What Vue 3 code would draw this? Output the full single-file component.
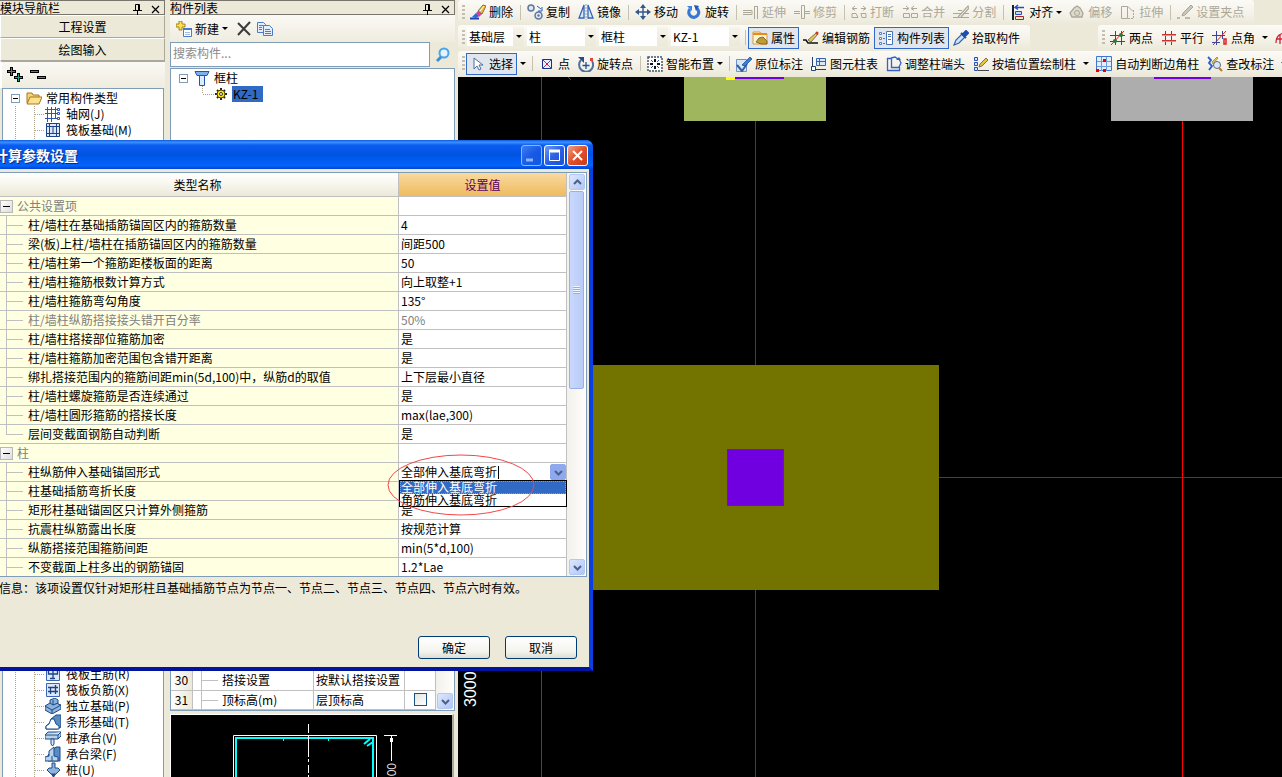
<script setup>
import { ref } from 'vue'

const icons = {
  brush: '<path d="M0 14.500h9" stroke="#1d3fae" stroke-width="2"/><path d="M2 13l4-4 3 3-3 2z" fill="#2b66d8"/><path d="M6 9l2-2 4 3-3 3z" fill="#d8409a"/><path d="M8 7l5-6 3 1-4 8z" fill="#f3c22b" stroke="#554" stroke-width=".8"/><path d="M10 7l4-5" stroke="#fff"/>',
  copy: '<circle cx="4" cy="4" r="3" fill="#dfe8f6" stroke="#5f779d" stroke-width="1.500"/><circle cx="11.500" cy="11.500" r="3.500" fill="#dfe8f6" stroke="#5f779d" stroke-width="1.500"/><circle cx="11.500" cy="11.500" r="1.200" fill="#5f779d"/><path d="M10 2l4 3M15 3v4h-4" stroke="#2d5cc0" fill="none"/>',
  mirror: '<path d="M6 1v13H1zM10 1v13h5z" fill="#dbe9fb" stroke="#3465b4" stroke-width="1.300"/><path d="M8 0v16" stroke="#88a4d0" stroke-dasharray="2 1"/>',
  move: '<path d="M8 2v12M2 8h12" stroke="#34568e" stroke-width="1.400"/><path d="M8 0l3 4H5zM8 16l3-4H5zM0 8l4-3v6zM16 8l-4-3v6z" fill="#34568e"/>',
  rotate: '<path d="M4 5a5 5 0 1 0 7-.500" fill="none" stroke="#3577d4" stroke-width="3.200"/><path d="M8 1l5 1-3 5z" fill="#2455b8"/><path d="M1 2h5v5z" fill="#3d82dd"/>',
  extend: '<path d="M0 8.500h8M0 6.500h9v4H0M11.500 2v13M14.500 2v13M11 2.500h4" stroke="#aca899"/>',
  trim: '<path d="M0 7.500h6M0 9.500h6M11 7.500h5M11 9.500h5" stroke="#aca899"/><path d="M7.500 1.500h3v13h-3z" fill="none" stroke="#aca899"/>',
  breaks: '<path d="M1 4.500h5M10 4.500h5M4 2L1 4.500l3 2M12 2l3 2.500-3 2M1 9.500h4l2 4H1zM10 9.500h5v4h-4z" fill="none" stroke="#aca899"/>',
  merge: '<path d="M1 4.500h5M10 4.500h5M4 2l3 2.500-3 2M12 2L9 4.500l3 2M1.500 9.500h6v4h-6zM9.500 9.500h6v4h-6z" fill="none" stroke="#aca899"/>',
  split: '<path d="M0 9.500h8M0 13.500h16M5 6.500h4M10 9.500h6M5 13L15 2l1 2-8 9" fill="none" stroke="#aca899" stroke-width="1.200"/>',
  align: '<path d="M3 1v15" stroke="#123" stroke-width="2"/><path d="M6 3.500h8M8 1L5 3.500l3 2" stroke="#2350c4" fill="none" stroke-width="1.400"/><path d="M5.500 7.500h6v3h-6z" fill="#c7d8f5" stroke="#2350c4"/><path d="M5.500 12.500h8v3h-8z" fill="#eec" stroke="#a22"/>',
  offset: '<path d="M8 2l3 2 3 5-1 4H3l-2-4 4-5z" fill="#ddd9cc" stroke="#aca899" stroke-width="1.300"/><circle cx="8" cy="9" r="2.500" fill="none" stroke="#aca899"/>',
  stretch: '<path d="M1.500 2.500h6v12h-6zM8 2.500l5 5" fill="none" stroke="#aca899"/><path d="M8 14.500h6M13.500 6v9" stroke="#aca899" stroke-dasharray="2 1"/>',
  pen: '<path d="M0 14h3M8 14h5" stroke="#aca899" stroke-width="1.500"/><path d="M5 12l1-3 8-8 2 2-8 8z" fill="#c9c6ba" stroke="#aca899"/>',
  prop: '<path d="M1 2h7l1 2h6v10H1z" fill="#fdf3d5" stroke="#d99a2d"/><path d="M1 4h14" stroke="#e88b1c" stroke-width="2"/><path d="M4 12l3-4 4-1 4 4v3H9z" fill="#c29b30" stroke="#6b5a20" stroke-width=".8"/>',
  rebar: '<path d="M0 10h3l2 3h10" fill="none" stroke="#111" stroke-width="1.500"/><path d="M5 10l8-7 2 1-7 8z" fill="#e8c84b" stroke="#555" stroke-width=".8"/><circle cx="14" cy="3" r="1.500" fill="#c33"/>',
  list: '<path d="M1.500 2.500h2v2h-2zM1.500 7.500h2v2h-2zM1.500 12.500h2v2h-2z" fill="#fff" stroke="#5a7fb8"/><path d="M8.500 1.500h6v13h-6z" fill="#fff" stroke="#4a74b8"/><path d="M10 4.500h3M10 6.500h3M10 9.500h3M5 3.500h2M5 8.500h2M5 13.500h2" stroke="#4a74b8"/>',
  picker: '<path d="M1 15l2-5 6-6 3 3-6 6z" fill="#cfe4fb" stroke="#2c62bd" stroke-width="1.200"/><path d="M8 3l5 5M10 4l3-3 2 2-3 3z" fill="#1e4fae" stroke="#1e4fae" stroke-width="2"/>',
  cursor: '<path d="M4 2v11l3-3 2 4 2-1-2-4h4z" fill="#fff" stroke="#4d6c9e"/>',
  point: '<path d="M3.500 3.500h9v9h-9z" fill="#eef" stroke="#1c2f8a"/><path d="M4 4l8 8M12 4l-8 8" stroke="#4457a8"/><path d="M7 7h2v2H7z" fill="#e11"/>',
  rotpoint: '<path d="M3 4a7 7 0 1 0 11 1" fill="none" stroke="#4f6f9f" stroke-width="2"/><path d="M8 6v7M4.500 9.500h7" stroke="#234f9c" stroke-width="1.300"/><path d="M0 1h6v6z" fill="#2f4d7c"/><path d="M12 2h3v3h-3z" fill="#d44"/>',
  smart: '<path d="M1 1h14v14H1z" fill="#fff" stroke="#456" stroke-width="1.500" stroke-dasharray="2 1"/><path d="M8 3v3M8 10v3M3 8h3M10 8h3" stroke="#111" stroke-width="2"/><path d="M4 4l2 2M12 4l-2 2M4 12l2-2M12 12l-2-2" stroke="#234fa0"/>',
  note: '<path d="M.500 3.500h10v12H.500z" fill="#d9e6f8" stroke="#6f93c6"/><path d="M1 9l5 6 5-7" fill="none" stroke="#31619c" stroke-width="2"/><path d="M6 9l8-8 2 2-7 7z" fill="#3d7fd8" stroke="#1d4fa0" stroke-width=".8"/>',
  coltable: '<path d="M1.500 1v14M1 13.500h14" stroke="#24406e"/><path d="M5.500 2.500h9v7h-9z" fill="#dce8fa" stroke="#3263b5"/><path d="M5 5.500h9M8.500 2v7" stroke="#3263b5"/><path d="M.500 10.500h4v4h-4z" fill="#fff" stroke="#24406e"/>',
  colend: '<path d="M1.500 2.500h4v9h8v3h-12zM5 2l4-1 3 2M13 11l2-4-2-4" fill="none" stroke="#3562c4" stroke-width="1.300"/><path d="M10 4h5l-2-3z" fill="#3562c4"/>',
  wallcol: '<path d="M1.500 1.500h3v3h-3zM1.500 6.500h3v3h-3zM1.500 11.500h3v3h-3z" fill="#dce8fa" stroke="#2451b5"/><path d="M5 14.500h11" stroke="#445"/><path d="M6 11l1-3 6-6 2 2-6 6z" fill="#e6c342" stroke="#654" stroke-width=".8"/>',
  autocol: '<path d="M.500.500h15v14H.500z" fill="#e2eefc" stroke="#3f76cc"/><path d="M5.500 1v14M10.500 1v14M1 5.500h14M1 10.500h14" stroke="#6e9be0"/><path d="M7 3h3v3H7zM0 13h3v3H0zM7 13h3v3H7z" fill="#e00"/>',
  check: '<path d="M1 1l3 3-2 3 3 3-3 4" fill="none" stroke="#2a5ec4" stroke-width="1.800"/><circle cx="10" cy="9" r="3.500" fill="#d6eafc" stroke="#667"/><path d="M12 12l3 3" stroke="#b57a2a" stroke-width="2"/><path d="M5 6l5-5 1 1-5 6z" fill="#e6c342" stroke="#665" stroke-width=".6"/>',
  twopt: '<path d="M0 5.500h15M0 11.500h15M5.500 1v14M11.500 1v14" stroke="#34469a"/><path d="M1 15L14 1" stroke="#d22"/><circle cx="5" cy="11" r="2" fill="#2d7a2d"/><circle cx="11" cy="5" r="2" fill="#2d7a2d"/>',
  parallel: '<path d="M4.500 1v14M10.500 1v14" stroke="#34469a"/><path d="M1 4.500h14M1 10.500h14" stroke="#c33"/><path d="M1 5.500h14M1 11.500h14" stroke="#99a8cc"/>',
  ptangle: '<path d="M0 5.500h13M0 12.500h8M4.500 1v14M10.500 1v8" stroke="#34469a"/><path d="M1 15L14 1" stroke="#d22"/><path d="M12 9h2v5h-2z" fill="none" stroke="#d22" stroke-width="1.500"/>',
  arc: '<path d="M1 13C1 5 6 3 12 3M1 9h8M5 5v9" fill="none" stroke="#c23" stroke-width="1.300"/>',
  folder: '<path d="M1 13V3h5l1 2h6v3" fill="#f6d476" stroke="#a9771c"/><path d="M1 14l3-7h12l-3 7z" fill="#fbe08d" stroke="#a9771c"/>',
  grid: '<path d="M2.500 1v15M6.500 1v15M10.500 1v12M0 3.500h13M0 7.500h13M0 12.500h13" stroke="#2c55b4"/><path d="M12.500 2.500h2v2h-2zM12.500 6.500h2v2h-2zM12.500 11.500h2v2h-2z" fill="#fff" stroke="#2c55b4"/>',
  raft: '<path d="M1.500 1.500h13v13h-13z" fill="#dce8fa" stroke="#1b4284"/><path d="M4.500 4.500h7v7h-7zM4.500 1v13M11.500 1v13M1 4.500h13M1 11.500h13M8 4v8" fill="none" stroke="#1b4284"/>',
  mainbar: '<path d="M1.500 1.500h13v13h-13z" fill="#dbe8fc" stroke="#3a64b8"/><path d="M3.500 5v3h9V5M8 3v9M5 12.500h5" fill="none" stroke="#1b4284" stroke-width="1.300"/>',
  negbar: '<path d="M1.500 1.500h13v13h-13z" fill="#dbe8fc" stroke="#3a64b8"/><path d="M3 5.500h10M3 9.500h10M5.500 5v7M10.500 3v9" fill="none" stroke="#1b4284" stroke-width="1.300"/>',
  pad: '<path d="M0 8l5-3V2l5-2 3 2v4l3 1v4l-9 5-7-4z" fill="#8db2dc" stroke="#1b4a86"/><path d="M0 8l7 4 9-5M7 12v4M5 5l3 2 5-2M8 7V2" fill="none" stroke="#1b4a86"/>',
  strip: '<path d="M1 15v-3l4-3 1-4 5-4h5v12l-4 2z" fill="#5a8cc4" stroke="#1b4a86"/><path d="M1 15v-3l3-2 2-5h3l2 5 3 2v3z" fill="#fff" stroke="#1b4a86"/>',
  cap: '<path d="M0 5l3-3h13v4l-3 3H0z" fill="#b8d2ee" stroke="#1b4a86"/><path d="M0 5h13l3-3M13 5v4M6 9h3v5l-1.500 2L6 14z" fill="#dce8fa" stroke="#1b4a86"/>',
  capbeam: '<path d="M3 15V9l8-8h4v14z" fill="#5a8cc4" stroke="#1b4a86"/><path d="M0 15v-4l4-1V5l5-4v9l4 1v4z" fill="#b8d2ee" stroke="#1b4a86"/><path d="M7 10v5" stroke="#1b4a86"/>',
  pile: '<path d="M7 1h3v5h3l2 2-4 4H6L2 8l2-2h3z" fill="#8db2dc" stroke="#1b4a86"/><path d="M6 12h5l-2.500 4z" fill="#1b4a86"/>',
  column: '<path d="M1 1.500h14l-2 4H3z" fill="#7fb0ee" stroke="#2255a4"/><path d="M5.500 5.500h5v10h-5z" fill="#dcecff" stroke="#2255a4"/>',
  gear: '<path d="M8 2v12M2 8h12M4 4l8 8M12 4l-8 8" stroke="#222" stroke-width="2"/><circle cx="8" cy="8" r="4" fill="#ffe600" stroke="#554400"/><circle cx="8" cy="8" r="1.500" fill="#fff" stroke="#333"/>',
  create: '<path d="M3 0h3v3h3v3H6v3H3V6H0V3h3z" fill="#ffe04a" stroke="#8a6d14" stroke-width=".8"/><path d="M7.500 7.500h8v8h-8z" fill="#fff" stroke="#4a7ac8"/><path d="M7 8h9" stroke="#4a7ac8" stroke-width="2"/><path d="M9 11.500h5M9 13.500h5" stroke="#9bbae8"/>',
  erase: '<path d="M2 2l12 12M14 1L2 14" stroke="#3b3b3b" stroke-width="2"/>',
  duplicate: '<path d="M.500 1.500h6l2 2v8h-8z" fill="#e5effc" stroke="#4a7ac8"/><path d="M6.500 4.500h6l3 3v7h-9z" fill="#e5effc" stroke="#4a7ac8"/><path d="M2 4.500h4M2 6.500h3M2 8.500h3M8 8.500h5M8 10.500h6M8 12.500h6" stroke="#4a7ac8"/>',
  search: '<circle cx="9" cy="6" r="4.500" fill="#e3f4ff" stroke="#4ba3e8" stroke-width="2"/><path d="M6 10l-4 4" stroke="#3a8fd8" stroke-width="3"/>',
  addall: '<path d="M4.500 0v9M0 4.500h9M11.500 6v9M7 10.500h9" stroke="#000" stroke-width="3"/><path d="M4.500 1v7M1 4.500h7M11.500 7v7M8 10.500h7" stroke="#15a08a"/>',
  suball: '<path d="M0 4.500h9M7 10.500h9" stroke="#000" stroke-width="3"/><path d="M1 4.500h7M8 10.500h7" stroke="#15a08a"/>',
  pin: '<path d="M5.500 3.500h4v6h-4zM3 9.500h9M7.500 10v4M8.500 4v5" fill="none" stroke="#000"/>',
  close: '<path d="M4 5l7 7M11 5l-7 7" stroke="#000" stroke-width="1.200"/>',
}

const row1 = [
  { t: '删除', i: 'brush' }, 0, { t: '复制', i: 'copy' }, { t: '镜像', i: 'mirror' }, 0,
  { t: '移动', i: 'move' }, { t: '旋转', i: 'rotate' }, 0,
  { t: '延伸', i: 'extend', off: true }, { t: '修剪', i: 'trim', off: true }, 0,
  { t: '打断', i: 'breaks', off: true }, { t: '合并', i: 'merge', off: true }, { t: '分割', i: 'split', off: true }, 0,
  { t: '对齐', i: 'align', menu: true }, { t: '偏移', i: 'offset', off: true }, { t: '拉伸', i: 'stretch', off: true }, 0,
  { t: '设置夹点', i: 'pen', off: true },
]
const row2 = [
  0, { t: '属性', i: 'prop', on: true }, { t: '编辑钢筋', i: 'rebar' },
  { t: '构件列表', i: 'list', on: true }, { t: '拾取构件', i: 'picker' },
]
const row2b = [
  { t: '两点', i: 'twopt' }, { t: '平行', i: 'parallel' }, { t: '点角', i: 'ptangle', split: true }, { t: '', i: 'arc' },
]
const row3 = [
  { t: '选择', i: 'cursor', on: true, split: true }, 0, { t: '点', i: 'point' }, { t: '旋转点', i: 'rotpoint' }, 0,
  { t: '智能布置', i: 'smart', menu: true }, 0, { t: '原位标注', i: 'note' }, { t: '图元柱表', i: 'coltable' },
  { t: '调整柱端头', i: 'colend' }, { t: '按墙位置绘制柱', i: 'wallcol', split: true },
  { t: '自动判断边角柱', i: 'autocol' }, { t: '查改标注', i: 'check', split: true },
]
const bars = [
  [{ items: row1 }],
  [{ combos: [['基础层', 'narrow'], ['柱'], ['框柱'], ['KZ-1']], items: row2 }, { items: row2b, far: true }],
  [{ items: row3, wide: true }],
]

const navTop = [['轴网(J)', 'grid'], ['筏板基础(M)', 'raft']]
const navBottom = [
  ['筏板主筋(R)', 'mainbar'], ['筏板负筋(X)', 'negbar'], ['独立基础(P)', 'pad'], ['条形基础(T)', 'strip'],
  ['桩承台(V)', 'cap'], ['承台梁(F)', 'capbeam'], ['桩(U)', 'pile'],
]

const params = [
  { n: '公共设置项', group: true },
  { n: '柱/墙柱在基础插筋锚固区内的箍筋数量', v: '4' },
  { n: '梁(板)上柱/墙柱在插筋锚固区内的箍筋数量', v: '间距500' },
  { n: '柱/墙柱第一个箍筋距楼板面的距离', v: '50' },
  { n: '柱/墙柱箍筋根数计算方式', v: '向上取整+1' },
  { n: '柱/墙柱箍筋弯勾角度', v: '135°' },
  { n: '柱/墙柱纵筋搭接接头错开百分率', v: '50%', off: true },
  { n: '柱/墙柱搭接部位箍筋加密', v: '是' },
  { n: '柱/墙柱箍筋加密范围包含错开距离', v: '是' },
  { n: '绑扎搭接范围内的箍筋间距min(5d,100)中，纵筋d的取值', v: '上下层最小直径' },
  { n: '柱/墙柱螺旋箍筋是否连续通过', v: '是' },
  { n: '柱/墙柱圆形箍筋的搭接长度', v: 'max(lae,300)' },
  { n: '层间变截面钢筋自动判断', v: '是', last: true },
  { n: '柱', group: true },
  { n: '柱纵筋伸入基础锚固形式', edit: true },
  { n: '柱基础插筋弯折长度', v: '' },
  { n: '矩形柱基础锚固区只计算外侧箍筋', v: '是' },
  { n: '抗震柱纵筋露出长度', v: '按规范计算' },
  { n: '纵筋搭接范围箍筋间距', v: 'min(5*d,100)' },
  { n: '不变截面上柱多出的钢筋锚固', v: '1.2*Lae' },
]
const options = ['全部伸入基底弯折', '角筋伸入基底弯折']
const anchor = ref(options[0])
const keyword = ref('')
const props = [
  { id: 30, n: '搭接设置', v: '按默认搭接设置' },
  { id: 31, n: '顶标高(m)', v: '层顶标高', check: true },
]
</script>

<template>
  <div class="app">
    <aside class="panel nav">
      <header class="caption">
        <span class="cap-text">模块导航栏</span>
        <button class="mini" aria-label="固定"><svg class="ico" viewBox="0 0 16 16" v-html="icons.pin" /></button>
        <button class="mini" aria-label="关闭"><svg class="ico" viewBox="0 0 16 16" v-html="icons.close" /></button>
      </header>
      <button class="section">工程设置</button>
      <button class="section">绘图输入</button>
      <div class="tools">
        <button class="mini" aria-label="全部展开"><svg class="ico" viewBox="0 0 16 16" v-html="icons.addall" /></button>
        <button class="mini" aria-label="全部折叠"><svg class="ico" viewBox="0 0 16 16" v-html="icons.suball" /></button>
      </div>
      <ul class="tree">
        <li class="root"><span class="fold"></span><svg class="ico" viewBox="0 0 16 16" v-html="icons.folder" /><span>常用构件类型</span></li>
        <li v-for="n in navTop" :key="n[0]" class="leaf"><svg class="ico" viewBox="0 0 16 16" v-html="icons[n[1]]" /><span>{{ n[0] }}</span></li>
        <li class="leaf-gap"></li>
        <li v-for="n in navBottom" :key="n[0]" class="leaf"><svg class="ico" viewBox="0 0 16 16" v-html="icons[n[1]]" /><span>{{ n[0] }}</span></li>
      </ul>
    </aside>

    <aside class="panel list">
      <header class="caption">
        <span class="cap-text">构件列表</span>
        <button class="mini" aria-label="固定"><svg class="ico" viewBox="0 0 16 16" v-html="icons.pin" /></button>
        <button class="mini" aria-label="关闭"><svg class="ico" viewBox="0 0 16 16" v-html="icons.close" /></button>
      </header>
      <div class="tools list-tools">
        <button class="tool"><svg class="ico" viewBox="0 0 16 16" v-html="icons.create" /><span>新建</span><i class="tri"></i></button>
        <button class="mini" aria-label="删除"><svg class="ico" viewBox="0 0 16 16" v-html="icons.erase" /></button>
        <button class="mini" aria-label="复制"><svg class="ico" viewBox="0 0 16 16" v-html="icons.duplicate" /></button>
      </div>
      <div class="search">
        <input v-model="keyword" type="text" placeholder="搜索构件..." aria-label="搜索构件" />
        <button class="go" aria-label="搜索"><svg class="ico" viewBox="0 0 16 16" v-html="icons.search" /></button>
      </div>
      <ul class="tree members">
        <li class="root"><span class="fold"></span><svg class="ico" viewBox="0 0 16 16" v-html="icons.column" /><span>框柱</span></li>
        <li class="leaf member"><svg class="ico" viewBox="0 0 16 16" v-html="icons.gear" /><span class="picked">KZ-1</span></li>
      </ul>
      <div class="props">
        <table>
          <tbody>
            <tr v-for="p in props" :key="p.id">
              <th scope="row">{{ p.id }}</th>
              <td class="c-fold"></td>
              <td class="c-name">{{ p.n }}</td>
              <td class="c-val">{{ p.v }}</td>
              <td class="c-chk"><input v-if="p.check" type="checkbox" :aria-label="p.n" /></td>
            </tr>
          </tbody>
        </table>
        <div class="scroll short"><button class="sb" aria-label="向下"><svg viewBox="0 0 9 9"><path d="M1 3l3.500 3.500L8 3" /></svg></button></div>
      </div>
      <svg class="preview">
        <path d="M62.500 63V20.500H205.500V63" stroke="#fff" fill="none" />
        <path d="M65 63V23H202V63" stroke="#0ff" stroke-width="2" fill="none" />
        <path d="M193 29l6-5M196 31l6-4" stroke="#0ff" stroke-width="2" />
        <path d="M112.500 24v2M157.500 24v2" stroke="#0ff" />
        <path d="M137.500 9v9M137.500 20v22M137.500 44v3M137.500 50v8M137.500 60v3" stroke="#fff" />
        <path d="M213 20.500h13M220.500 21v25" stroke="#fff" />
        <rect x="219" y="23" width="3" height="4" fill="#fff" />
        <text transform="translate(225 48) rotate(-90)" text-anchor="end">00</text>
      </svg>
    </aside>

    <main class="work">
      <div v-for="(line, r) in bars" :key="r" class="line">
        <div v-for="(bar, b) in line" :key="b" class="bar" :class="{ far: bar.far, wide: bar.wide }">
          <i class="grip"></i>
          <span v-for="c in bar.combos" :key="c[0]" class="combo" :class="c[1]">
            <select :aria-label="c[0]"><option>{{ c[0] }}</option></select><i class="tri"></i>
          </span>
          <template v-for="(it, k) in bar.items" :key="k">
            <i v-if="!it" class="sep"></i>
            <template v-else>
              <button class="tool" :class="{ on: it.on }" :disabled="it.off" :aria-label="it.t || '弧'">
                <svg class="ico" viewBox="0 0 16 16" v-html="icons[it.i]" /><span>{{ it.t }}</span><i v-if="it.menu" class="tri"></i>
              </button>
              <button v-if="it.split" class="drop" :aria-label="it.t + '选项'"><i class="tri"></i></button>
            </template>
          </template>
        </div>
      </div>
      <div class="canvas">
        <svg class="scene">
          <path d="M83.500 0V700M110 0l3 3" stroke="#0a720a" />
          <path d="M297.500 44V700M481 400.500H1600" stroke="#dc0000" />
          <path d="M724.500 44V700" stroke="#f00" />
          <rect x="226" y="0" width="142" height="44" fill="#a0b65e" />
          <rect x="268" y="0" width="9" height="3" fill="#ff0" />
          <rect x="277" y="0" width="49" height="2" fill="#7000e0" />
          <rect x="653" y="0" width="142" height="44" fill="#adadad" />
          <rect x="696" y="0" width="57" height="2" fill="#7000e0" />
          <rect x="100" y="288" width="381" height="225" fill="#737300" />
          <rect x="269.500" y="372.500" width="56" height="56" fill="#7000e0" stroke="#503070" />
          <text transform="translate(18 630) rotate(-90)">3000</text>
        </svg>
      </div>
    </main>

    <section class="dialog" role="dialog" aria-labelledby="dlg-title">
      <header class="title">
        <h1 id="dlg-title">计算参数设置</h1>
        <button class="win dim" aria-label="最小化"><svg viewBox="0 0 19 19"><path d="M4 14h7" stroke-width="3" /></svg></button>
        <button class="win" aria-label="最大化"><svg viewBox="0 0 19 19"><path d="M4.500 4v10.500h10V4" /><path d="M4 5h11" stroke-width="3" /></svg></button>
        <button class="win red" aria-label="关闭"><svg viewBox="0 0 19 19"><path d="M5 5l9 9M14 5l-9 9" stroke-width="2" /></svg></button>
      </header>
      <div class="body">
        <div class="box">
          <table class="params">
            <thead><tr><th scope="col">类型名称</th><th scope="col" class="val-head">设置值</th></tr></thead>
            <tbody>
              <tr v-for="p in params" :key="p.n" :class="{ group: p.group, off: p.off, last: p.last }">
                <td class="name"><button v-if="p.group" class="fold big" :aria-label="p.n"></button>{{ p.n }}</td>
                <td class="value">
                  <div v-if="p.edit" class="edit">
                    <input v-model="anchor" type="text" :aria-label="p.n" /><i class="caret"></i>
                    <button class="sb" aria-label="展开"><svg viewBox="0 0 9 9"><path d="M1 3l3.500 3.500L8 3" /></svg></button>
                    <ul class="options" role="listbox">
                      <li v-for="o in options" :key="o" role="option" :aria-selected="o === anchor" :class="{ sel: o === anchor }" @click="anchor = o">{{ o }}</li>
                    </ul>
                    <svg class="mark" viewBox="0 0 148 62"><ellipse cx="74" cy="31" rx="73" ry="30" /></svg>
                  </div>
                  <template v-else>{{ p.v }}</template>
                </td>
              </tr>
            </tbody>
          </table>
          <div class="scroll">
            <button class="sb" aria-label="向上"><svg viewBox="0 0 9 9"><path d="M1 6l3.500-3.500L8 6" /></svg></button>
            <div class="thumb"><i></i></div>
            <button class="sb end" aria-label="向下"><svg viewBox="0 0 9 9"><path d="M1 3l3.500 3.500L8 3" /></svg></button>
          </div>
        </div>
        <p class="info">信息：该项设置仅针对矩形柱且基础插筋节点为节点一、节点二、节点三、节点四、节点六时有效。</p>
        <div class="actions"><button>确定</button><button>取消</button></div>
      </div>
    </section>
  </div>
</template>

<style>
body { margin: 0; overflow: hidden; }
</style>

<style scoped>
* { box-sizing: border-box; }
.app {
  position: relative; display: flex; height: 100vh; overflow: hidden; background: #ece9d8; color: #000;
  font: 12px/16px "Noto Sans CJK SC", sans-serif;
}
button, input, select { font: inherit; color: inherit; padding: 0; margin: 0; border: 0; background: none; border-radius: 0; }
ul { list-style: none; margin: 0; padding: 0; }
table { border-collapse: separate; border-spacing: 0; table-layout: fixed; }
th, td { padding: 0; font-weight: normal; text-align: left; white-space: nowrap; }
.ico { width: 16px; height: 16px; flex: none; fill: none; display: block; }
.tri { border: 3px solid transparent; border-top-color: #000; border-bottom: 0; width: 6px; height: 3px; flex: none; }
.mini { height: 16px; }

.panel { display: flex; flex-direction: column; flex: none; }
.nav { width: 165px; margin-right: 5px; }
.list { width: 285px; margin-right: 3px; }
.caption { display: flex; height: 15px; flex: none; border: solid #77756c; border-width: 1px 1px 1px 0; }
.cap-text { flex: 1; line-height: 13px; }
.caption .mini { width: 18px; height: 14px; padding-left: 2px; }
.section { height: 23px; flex: none; background: #ece9d8; border: 1px solid; border-color: #fff #aca899 #aca899 #fff; line-height: 20px; }
.tools { display: flex; align-items: center; gap: 6px; height: 27px; flex: none; padding-left: 5px; background: linear-gradient(#faf9f4, #efecdf); border-left: 2px solid #fff; }
.nav .tools { border-top: 1px solid #aca899; gap: 7px; }
.list-tools { gap: 5px; padding-left: 2px; border-left: 0; }
.tree { flex: 1; min-height: 0; background: #fff; border: 1px solid #7f9db9; overflow: hidden; padding-top: 1px; }
.nav .tree { margin: 0 1px 0 2px; border-bottom: 0; }
.tree li {
  display: flex; align-items: center; height: 16px; line-height: 16px; white-space: nowrap;
  background-repeat: no-repeat;
}
.root { gap: 4px; padding-left: 8px; }
.root .ico { margin-left: 2px; }
.fold { width: 9px; height: 9px; flex: none; border: 1px solid #7f9db9; background: linear-gradient(#000, #000) center / 5px 1px no-repeat #fff; }
.leaf { gap: 5px; padding-left: 42px; }
.leaf, .leaf-gap {
  background-image: repeating-linear-gradient(#aca58c 0 1px, transparent 1px 2px), repeating-linear-gradient(#aca58c 0 1px, transparent 1px 2px), repeating-linear-gradient(90deg, #aca58c 0 1px, transparent 1px 2px);
  background-size: 1px 100%, 1px 100%, 10px 1px; background-position: 12px 0, 31px 0, 32px 8px;
}
.tree .leaf-gap { height: 528px; background-size: 1px 100%, 1px 100%, 0 0; }
.members .member { padding-left: 42px; gap: 3px; background-size: 0 0, 1px 8px, 12px 1px; }
.picked { background: #316ac5; padding: 0 3px 0 1px; min-width: 31px; }
.search { display: flex; height: 25px; flex: none; margin-bottom: 1px; }
.search input { flex: 1; min-width: 0; border: 1px solid #7f9db9; background: #fff; padding: 0 2px 4px; }
.search input::placeholder { color: #8b8b8b; opacity: 1; }
.go { width: 25px; display: grid; place-items: center; }
.members { padding-top: 1px; }

.props { display: flex; flex: none; background: #fff; border: 1px solid #7f9db9; border-top: 0; height: 40px; margin-bottom: 3px; }
.props table { flex: 1; }
.props tr { height: 19px; }
.props th, .props td { border: solid #c0c0c0; border-width: 0 1px 1px 0; line-height: 18px; height: 19px; }
.props th { width: 22px; text-align: center; background: linear-gradient(90deg, #fff, #ece9d8); }
.props .c-fold { width: 9px; }
.props .c-name { width: 112px; padding-left: 20px; background: linear-gradient(#c0c0c0, #c0c0c0) 0 9px / 16px 1px no-repeat; }
.props .c-val { width: 91px; padding-left: 2px; }
.props .c-chk { width: 31px; }
.c-chk input { display: block; appearance: none; width: 13px; height: 13px; border: 1px solid #1c5180; background: linear-gradient(135deg, #e4e4df, #fff); margin: 0 auto; }
.preview { display: block; width: 284px; height: 63px; flex: none; background: #000; border: 1px solid #fff; border-right: 2px solid #aca899; border-bottom: 0; }
.preview text { font: 12px "Liberation Sans", sans-serif; fill: #ddd; }

.work { flex: 1; min-width: 0; display: flex; flex-direction: column; }
.line { display: flex; height: 26px; flex: none; overflow: hidden; }
.line:first-child { height: 25px; }
.bar { display: flex; align-items: center; flex: none; padding: 0 6px 1px 4px; border-radius: 3px; background: linear-gradient(#fbfaf6, #f3f1e7 60%, #ebe8d9); }
.wide { flex: 1 0 auto; }
.far { margin-left: 68px; }
.grip { width: 3px; height: 15px; flex: none; margin-right: 1px; background: repeating-linear-gradient(#c2bfae 0 2px, transparent 2px 4px); }
.tool { display: flex; align-items: center; gap: 3px; height: 22px; padding: 0 4px; white-space: nowrap; flex: none; }
.tool .tri { margin-right: -1px; }
.tool.on { border: 1px solid #316ac5; background: #e1e6ee; padding: 0 3px; }
.tool:disabled { color: #aca899; }
.drop { width: 12px; height: 22px; display: grid; place-items: center; flex: none; }
.sep { width: 1px; height: 15px; margin: 0 2px 0 3px; background: #c5c2b2; flex: none; }
.combo { display: flex; align-items: center; width: 69px; height: 19px; margin: 0 0 2px 3px; background: #fff; flex: none; }
.combo.narrow { width: 57px; margin-left: 1px; }
.combo + .sep { margin-left: 5px; }
.combo select { flex: 1; min-width: 0; height: 19px; appearance: none; padding-left: 2px; outline: 0; }
.combo .tri { width: 11px; height: 19px; border: 0; background: linear-gradient(#f6f4ec, #ece9d8); display: grid; place-items: center; }
.combo .tri::before { content: ""; border: 3px solid transparent; border-top-color: #000; border-bottom: 0; }
.canvas { flex: 1; min-height: 0; background: #000; overflow: hidden; }
.scene { display: block; width: 100%; height: 100%; }
.scene text { font: 16px "Liberation Sans", sans-serif; fill: #fff; }

.dialog {
  position: absolute; left: -11px; top: 140px; width: 604px; background: #ece9d8;
  border: solid #0831d9; border-width: 0 4px 4px; border-radius: 7px 7px 0 0; border-color: #0a3fe0 #0a3fe0 #0014a0;
}
.title {
  display: flex; align-items: center; gap: 2px; height: 29px; margin: 0 -4px; padding: 1px 5px 0 5px; border-radius: 7px 7px 0 0;
  background: linear-gradient(#0a5ce8, #3b90ff 8%, #0a5cf0 18%, #0054e3 50%, #0363fc 88%, #0144d0);
}
.title h1 { flex: 1; margin: 0; font-size: 14px; line-height: 20px; font-weight: bold; color: #fff; text-shadow: 1px 1px #0a2a80; }
.win { width: 21px; height: 21px; border: 1px solid #fff; border-radius: 3px; background: linear-gradient(135deg, #6f9cf7, #2a5fe6 50%, #1c50d8); }
.win svg { display: block; width: 19px; height: 19px; fill: none; stroke: #fff; }
.win.dim { opacity: .55; }
.win.red { background: linear-gradient(135deg, #f0a088, #e0502a 50%, #c83c14); }
.body { padding: 3px 2px 8px 3px; }
.box { display: flex; border: 1px solid #7f9db9; background: #fff; }
.params { flex: 1; min-width: 0; }
.params thead th { height: 24px; border: solid #c0c0c0; border-width: 0 1px 1px 0; text-align: center; background: linear-gradient(#fff, #fbfaf5 30%, #ece9d8); }
.params thead .val-head { width: 168px; background: linear-gradient(#f9d9a0, #eebb5e); color: #5a0060; }
.params tbody td { height: 19px; line-height: 18px; border: solid #c0c0c0; border-width: 0 1px 1px 0; }
.params tbody tr:last-child td { height: 18px; border-bottom: 0; }
.params .name {
  padding-left: 31px; background-color: #ffffe1; background-repeat: no-repeat;
  background-image: linear-gradient(#c0c0c0, #c0c0c0), linear-gradient(#c0c0c0, #c0c0c0);
  background-size: 1px 100%, 17px 1px; background-position: 9px 0, 9px 9px;
}
.params .last .name { background-size: 1px 9px, 17px 1px; }
.params .group .name { padding-left: 3px; background-image: none; color: #808080; }
.fold.big { width: 13px; height: 13px; border-color: #b8b8b8; background: linear-gradient(#000, #000) center / 7px 1px no-repeat, linear-gradient(135deg, #fff, #dcdcdc); margin-right: 4px; vertical-align: -1px; }
.params .value { padding-left: 2px; }
.off td { color: #808080; }
.edit { position: relative; display: flex; height: 18px; align-items: center; }
.edit input { width: 97px; height: 16px; outline: 0; }
.caret { width: 1px; height: 13px; background: #000; }
.sb { width: 16px; height: 16px; flex: none; display: grid; place-items: center; border: 1px solid #b4c8f6; border-radius: 2px; background: linear-gradient(135deg, #dde7fe, #b0c6f8); }
.sb svg { width: 9px; height: 9px; fill: none; stroke: #4d6185; stroke-width: 2; }
.edit .sb { margin-left: auto; background: #8fa9ee; border-color: #8fa9ee; }
.options { position: absolute; left: -2px; top: 17px; width: 168px; border: 1px solid #000; background: #fff; z-index: 1; }
.options li { height: 12px; line-height: 12px; padding-left: 1px; }
.options .sel { background: #316ac5; color: #fff; height: 13px; outline: 1px dotted #d89030; outline-offset: -1px; }
.mark { position: absolute; left: -14px; top: -9px; width: 148px; height: 62px; fill: none; stroke: #f04848; z-index: 2; pointer-events: none; }
.scroll { display: flex; flex-direction: column; width: 19px; flex: none; padding: 1px 1px 1px 2px; background: linear-gradient(90deg, #f3f1ec, #fefefb); }
.thumb { height: 198px; width: 15px; margin-top: 1px; border: 1px solid #98b0e8; border-radius: 2px; background: linear-gradient(90deg, #c9d8fc, #b8cbf9); display: grid; place-items: center; }
.thumb i { width: 7px; height: 8px; background: repeating-linear-gradient(#eef4fe 0 1px, #8cb0f8 1px 2px); }
.end { margin-top: auto; }
.scroll.short { justify-content: flex-end; width: 18px; padding: 1px 1px; }
.info { margin: 3px 0 0; padding-left: 3px; white-space: nowrap; }
.actions { display: flex; justify-content: flex-end; gap: 15px; margin: 40px 10px 0 0; }
.actions button { width: 72px; height: 23px; border: 1px solid #003c74; border-radius: 3px; background: linear-gradient(#fff, #f3f3ee 70%, #e0ddd0); }
</style>
